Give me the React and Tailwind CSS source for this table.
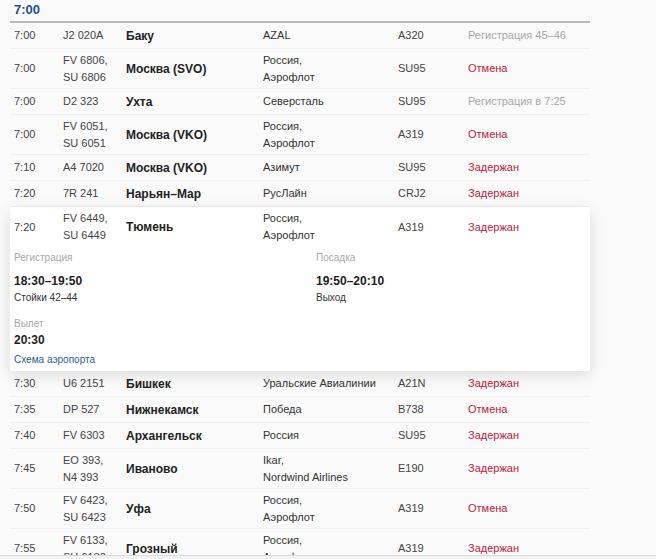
import React from 'react'

const ROWS = [
  { time: '7:00', flight: ['J2 020A'], city: 'Баку', airline: ['AZAL'], plane: 'A320', status: 'Регистрация 45–46', kind: 'info' },
  { time: '7:00', flight: ['FV 6806,', 'SU 6806'], city: 'Москва (SVO)', airline: ['Россия,', 'Аэрофлот'], plane: 'SU95', status: 'Отмена', kind: 'bad' },
  { time: '7:00', flight: ['D2 323'], city: 'Ухта', airline: ['Северсталь'], plane: 'SU95', status: 'Регистрация в 7:25', kind: 'info' },
  { time: '7:00', flight: ['FV 6051,', 'SU 6051'], city: 'Москва (VKO)', airline: ['Россия,', 'Аэрофлот'], plane: 'A319', status: 'Отмена', kind: 'bad' },
  { time: '7:10', flight: ['A4 7020'], city: 'Москва (VKO)', airline: ['Азимут'], plane: 'SU95', status: 'Задержан', kind: 'bad' },
  { time: '7:20', flight: ['7R 241'], city: 'Нарьян–Мар', airline: ['РусЛайн'], plane: 'CRJ2', status: 'Задержан', kind: 'bad' },
]

const OPEN_ROW = { time: '7:20', flight: ['FV 6449,', 'SU 6449'], city: 'Тюмень', airline: ['Россия,', 'Аэрофлот'], plane: 'A319', status: 'Задержан', kind: 'bad' }

const ROWS_AFTER = [
  { time: '7:30', flight: ['U6 2151'], city: 'Бишкек', airline: ['Уральские Авиалинии'], plane: 'A21N', status: 'Задержан', kind: 'bad' },
  { time: '7:35', flight: ['DP 527'], city: 'Нижнекамск', airline: ['Победа'], plane: 'B738', status: 'Отмена', kind: 'bad' },
  { time: '7:40', flight: ['FV 6303'], city: 'Архангельск', airline: ['Россия'], plane: 'SU95', status: 'Задержан', kind: 'bad' },
  { time: '7:45', flight: ['EO 393,', 'N4 393'], city: 'Иваново', airline: ['Ikar,', 'Nordwind Airlines'], plane: 'E190', status: 'Задержан', kind: 'bad' },
  { time: '7:50', flight: ['FV 6423,', 'SU 6423'], city: 'Уфа', airline: ['Россия,', 'Аэрофлот'], plane: 'A319', status: 'Отмена', kind: 'bad' },
  { time: '7:55', flight: ['FV 6133,', 'SU 6133'], city: 'Грозный', airline: ['Россия,', 'Аэрофлот'], plane: 'A319', status: 'Задержан', kind: 'bad' },
]

function Lines({ items }) {
  return (
    <div className="leading-[17px]">
      {items.map((t) => (
        <div key={t} className="whitespace-nowrap">{t}</div>
      ))}
    </div>
  )
}

function FlightRow({ row, open }) {
  const tall = row.flight.length > 1 || row.airline.length > 1
  return (
    <div
      className={`grid grid-cols-[49px_63px_137px_135px_70px_1fr] items-center pl-[4px] text-[11px] text-[#333] ${
        tall ? 'h-[40px]' : 'h-[26px]'
      } ${open ? 'bg-white' : 'border-b border-[#efefef]'}`}
    >
      <div className="text-[#444]">{row.time}</div>
      <div className="text-[#444]">
        <Lines items={row.flight} />
      </div>
      <div className="text-[12px] font-bold text-[#222] whitespace-nowrap">{row.city}</div>
      <div>
        <Lines items={row.airline} />
      </div>
      <div className="text-[#444]">{row.plane}</div>
      <div className={row.kind === 'bad' ? 'text-[#c4203c]' : 'text-[#a8a8a8]'}>{row.status}</div>
    </div>
  )
}

function Details() {
  return (
    <div className="grid grid-cols-[302px_1fr] pl-[4px] pt-[5px] pb-[5px] text-[#333]">
      <div>
        <div className="text-[10px] leading-[12px] text-[#a8a8a8]">Регистрация</div>
        <div className="mt-[9px] text-[12px] font-bold leading-[16px] text-[#222]">18:30–19:50</div>
        <div className="mt-[3px] text-[10px] leading-[12px]">Стойки 42–44</div>
        <div className="mt-[14px] text-[10px] leading-[12px] text-[#a8a8a8]">Вылет</div>
        <div className="mt-[2px] text-[12px] font-bold leading-[16px] text-[#222]">20:30</div>
        <a href="#" className="mt-[6px] block text-[10px] leading-[12px] text-[#2a5c9a]">
          Схема аэропорта
        </a>
      </div>
      <div>
        <div className="text-[10px] leading-[12px] text-[#a8a8a8]">Посадка</div>
        <div className="mt-[9px] text-[12px] font-bold leading-[16px] text-[#222]">19:50–20:10</div>
        <div className="mt-[3px] text-[10px] leading-[12px]">Выход</div>
      </div>
    </div>
  )
}

export default function App() {
  return (
    <div className="flex h-[559px] flex-col overflow-hidden bg-[#fafafa] font-['Liberation_Sans',Arial,sans-serif]">
      <div className="flex-1 overflow-hidden">
        <div className="ml-[10px] w-[580px]">
          <div className="h-[23px] border-b-2 border-[#b8b8b8] pl-[4px] text-[13px] font-bold leading-[19px] text-[#1e4f8f]">
            7:00
          </div>
          {ROWS.map((r, i) => (
            <FlightRow key={i} row={r} />
          ))}
          <div className="relative z-10 bg-white shadow-[0_4px_14px_rgba(0,0,0,0.12)]">
            <FlightRow row={OPEN_ROW} open />
            <Details />
          </div>
          {ROWS_AFTER.map((r, i) => (
            <FlightRow key={i} row={r} />
          ))}
        </div>
      </div>
      <div className="h-[4px] border-t border-[#dcdcdc] bg-[#f3f3f3]" />
    </div>
  )
}
